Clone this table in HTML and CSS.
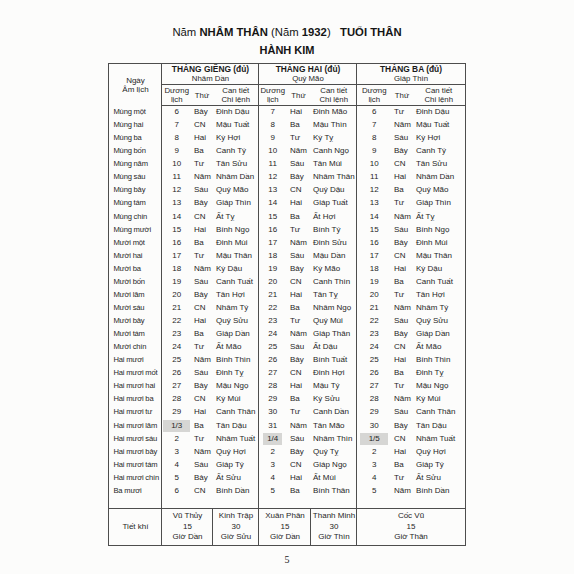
FILE: index.html
```html
<!DOCTYPE html>
<html lang="vi">
<head>
<meta charset="utf-8">
<title>Năm Nhâm Thân 1932</title>
<link rel="stylesheet" href="styles.css">
</head>
<body>
<div class="page">
  <div class="title"><span class="r">Năm </span><b>NHÂM THÂN</b> <span class="r">(Năm </span><b>1932</b><span class="r">)</span>&nbsp;&nbsp;&nbsp;<b>TUỔI THÂN</b></div>
  <div class="sub">HÀNH KIM</div>
  <table class="cal">
    <colgroup>
      <col class="w0">
      <col class="w1d"><col class="w1t"><col class="w1c">
      <col class="w2d"><col class="w2t"><col class="w2c">
      <col class="w3d"><col class="w3t"><col class="w3c">
    </colgroup>
    <thead>
      <tr class="h1">
        <th rowspan="2" class="hn">Ngày<br>Âm lịch</th>
        <th colspan="3" class="mh"><b>THÁNG GIÊNG (đủ)</b><br>Nhâm Dần</th>
        <th colspan="3" class="mh"><b>THÁNG HAI (đủ)</b><br>Quý Mão</th>
        <th colspan="3" class="mh"><b>THÁNG BA (đủ)</b><br>Giáp Thìn</th>
      </tr>
      <tr class="h2">
        <th class="sh">Dương<br>lịch</th><th class="sh">Thứ</th><th class="sh e">Can tiết<br>Chi lệnh</th>
        <th class="sh">Dương<br>lịch</th><th class="sh">Thứ</th><th class="sh e">Can tiết<br>Chi lệnh</th>
        <th class="sh">Dương<br>lịch</th><th class="sh">Thứ</th><th class="sh e">Can tiết<br>Chi lệnh</th>
      </tr>
    </thead>
    <tbody>
      <tr><td class="n">Mùng một</td><td class="d">6</td><td class="t">Bảy</td><td class="c">Đinh Dậu</td><td class="d">7</td><td class="t t2">Hai</td><td class="c c2">Đinh Mão</td><td class="d">6</td><td class="t">Tư</td><td class="c">Đinh Dậu</td></tr>
      <tr><td class="n">Mùng hai</td><td class="d">7</td><td class="t">CN</td><td class="c">Mậu Tuất</td><td class="d">8</td><td class="t t2">Ba</td><td class="c c2">Mậu Thìn</td><td class="d">7</td><td class="t">Năm</td><td class="c">Mậu Tuất</td></tr>
      <tr><td class="n">Mùng ba</td><td class="d">8</td><td class="t">Hai</td><td class="c">Kỷ Hợi</td><td class="d">9</td><td class="t t2">Tư</td><td class="c c2">Kỷ Tỵ</td><td class="d">8</td><td class="t">Sáu</td><td class="c">Kỷ Hợi</td></tr>
      <tr><td class="n">Mùng bốn</td><td class="d">9</td><td class="t">Ba</td><td class="c">Canh Tý</td><td class="d">10</td><td class="t t2">Năm</td><td class="c c2">Canh Ngọ</td><td class="d">9</td><td class="t">Bảy</td><td class="c">Canh Tý</td></tr>
      <tr><td class="n">Mùng năm</td><td class="d">10</td><td class="t">Tư</td><td class="c">Tân Sửu</td><td class="d">11</td><td class="t t2">Sáu</td><td class="c c2">Tân Mùi</td><td class="d">10</td><td class="t">CN</td><td class="c">Tân Sửu</td></tr>
      <tr><td class="n">Mùng sáu</td><td class="d">11</td><td class="t">Năm</td><td class="c">Nhâm Dần</td><td class="d">12</td><td class="t t2">Bảy</td><td class="c c2">Nhâm Thân</td><td class="d">11</td><td class="t">Hai</td><td class="c">Nhâm Dần</td></tr>
      <tr><td class="n">Mùng bảy</td><td class="d">12</td><td class="t">Sáu</td><td class="c">Quý Mão</td><td class="d">13</td><td class="t t2">CN</td><td class="c c2">Quý Dậu</td><td class="d">12</td><td class="t">Ba</td><td class="c">Quý Mão</td></tr>
      <tr><td class="n">Mùng tám</td><td class="d">13</td><td class="t">Bảy</td><td class="c">Giáp Thìn</td><td class="d">14</td><td class="t t2">Hai</td><td class="c c2">Giáp Tuất</td><td class="d">13</td><td class="t">Tư</td><td class="c">Giáp Thìn</td></tr>
      <tr><td class="n">Mùng chín</td><td class="d">14</td><td class="t">CN</td><td class="c">Ất Tỵ</td><td class="d">15</td><td class="t t2">Ba</td><td class="c c2">Ất Hợi</td><td class="d">14</td><td class="t">Năm</td><td class="c">Ất Tỵ</td></tr>
      <tr><td class="n">Mùng mười</td><td class="d">15</td><td class="t">Hai</td><td class="c">Bính Ngọ</td><td class="d">16</td><td class="t t2">Tư</td><td class="c c2">Bính Tý</td><td class="d">15</td><td class="t">Sáu</td><td class="c">Bính Ngọ</td></tr>
      <tr><td class="n">Mười một</td><td class="d">16</td><td class="t">Ba</td><td class="c">Đinh Mùi</td><td class="d">17</td><td class="t t2">Năm</td><td class="c c2">Đinh Sửu</td><td class="d">16</td><td class="t">Bảy</td><td class="c">Đinh Mùi</td></tr>
      <tr><td class="n">Mười hai</td><td class="d">17</td><td class="t">Tư</td><td class="c">Mậu Thân</td><td class="d">18</td><td class="t t2">Sáu</td><td class="c c2">Mậu Dần</td><td class="d">17</td><td class="t">CN</td><td class="c">Mậu Thân</td></tr>
      <tr><td class="n">Mười ba</td><td class="d">18</td><td class="t">Năm</td><td class="c">Kỷ Dậu</td><td class="d">19</td><td class="t t2">Bảy</td><td class="c c2">Kỷ Mão</td><td class="d">18</td><td class="t">Hai</td><td class="c">Kỷ Dậu</td></tr>
      <tr><td class="n">Mười bốn</td><td class="d">19</td><td class="t">Sáu</td><td class="c">Canh Tuất</td><td class="d">20</td><td class="t t2">CN</td><td class="c c2">Canh Thìn</td><td class="d">19</td><td class="t">Ba</td><td class="c">Canh Tuất</td></tr>
      <tr><td class="n">Mười lăm</td><td class="d">20</td><td class="t">Bảy</td><td class="c">Tân Hợi</td><td class="d">21</td><td class="t t2">Hai</td><td class="c c2">Tân Tỵ</td><td class="d">20</td><td class="t">Tư</td><td class="c">Tân Hợi</td></tr>
      <tr><td class="n">Mười sáu</td><td class="d">21</td><td class="t">CN</td><td class="c">Nhâm Tý</td><td class="d">22</td><td class="t t2">Ba</td><td class="c c2">Nhâm Ngọ</td><td class="d">21</td><td class="t">Năm</td><td class="c">Nhâm Tý</td></tr>
      <tr><td class="n">Mười bảy</td><td class="d">22</td><td class="t">Hai</td><td class="c">Quý Sửu</td><td class="d">23</td><td class="t t2">Tư</td><td class="c c2">Quý Mùi</td><td class="d">22</td><td class="t">Sáu</td><td class="c">Quý Sửu</td></tr>
      <tr><td class="n">Mười tám</td><td class="d">23</td><td class="t">Ba</td><td class="c">Giáp Dần</td><td class="d">24</td><td class="t t2">Năm</td><td class="c c2">Giáp Thân</td><td class="d">23</td><td class="t">Bảy</td><td class="c">Giáp Dần</td></tr>
      <tr><td class="n">Mười chín</td><td class="d">24</td><td class="t">Tư</td><td class="c">Ất Mão</td><td class="d">25</td><td class="t t2">Sáu</td><td class="c c2">Ất Dậu</td><td class="d">24</td><td class="t">CN</td><td class="c">Ất Mão</td></tr>
      <tr><td class="n">Hai mươi</td><td class="d">25</td><td class="t">Năm</td><td class="c">Bính Thìn</td><td class="d">26</td><td class="t t2">Bảy</td><td class="c c2">Bính Tuất</td><td class="d">25</td><td class="t">Hai</td><td class="c">Bính Thìn</td></tr>
      <tr><td class="n">Hai mươi mốt</td><td class="d">26</td><td class="t">Sáu</td><td class="c">Đinh Tỵ</td><td class="d">27</td><td class="t t2">CN</td><td class="c c2">Đinh Hợi</td><td class="d">26</td><td class="t">Ba</td><td class="c">Đinh Tỵ</td></tr>
      <tr><td class="n">Hai mươi hai</td><td class="d">27</td><td class="t">Bảy</td><td class="c">Mậu Ngọ</td><td class="d">28</td><td class="t t2">Hai</td><td class="c c2">Mậu Tý</td><td class="d">27</td><td class="t">Tư</td><td class="c">Mậu Ngọ</td></tr>
      <tr><td class="n">Hai mươi ba</td><td class="d">28</td><td class="t">CN</td><td class="c">Kỷ Mùi</td><td class="d">29</td><td class="t t2">Ba</td><td class="c c2">Kỷ Sửu</td><td class="d">28</td><td class="t">Năm</td><td class="c">Kỷ Mùi</td></tr>
      <tr><td class="n">Hai mươi tư</td><td class="d">29</td><td class="t">Hai</td><td class="c">Canh Thân</td><td class="d">30</td><td class="t t2">Tư</td><td class="c c2">Canh Dần</td><td class="d">29</td><td class="t">Sáu</td><td class="c">Canh Thân</td></tr>
      <tr><td class="n">Hai mươi lăm</td><td class="d"><span class="hl h1">1/3</span></td><td class="t">Ba</td><td class="c">Tân Dậu</td><td class="d">31</td><td class="t t2">Năm</td><td class="c c2">Tân Mão</td><td class="d">30</td><td class="t">Bảy</td><td class="c">Tân Dậu</td></tr>
      <tr><td class="n">Hai mươi sáu</td><td class="d">2</td><td class="t">Tư</td><td class="c">Nhâm Tuất</td><td class="d"><span class="hl h2">1/4</span></td><td class="t t2">Sáu</td><td class="c c2">Nhâm Thìn</td><td class="d"><span class="hl h3">1/5</span></td><td class="t">CN</td><td class="c">Nhâm Tuất</td></tr>
      <tr><td class="n">Hai mươi bảy</td><td class="d">3</td><td class="t">Năm</td><td class="c">Quý Hợi</td><td class="d">2</td><td class="t t2">Bảy</td><td class="c c2">Quý Tỵ</td><td class="d">2</td><td class="t">Hai</td><td class="c">Quý Hợi</td></tr>
      <tr><td class="n">Hai mươi tám</td><td class="d">4</td><td class="t">Sáu</td><td class="c">Giáp Tý</td><td class="d">3</td><td class="t t2">CN</td><td class="c c2">Giáp Ngọ</td><td class="d">3</td><td class="t">Ba</td><td class="c">Giáp Tý</td></tr>
      <tr><td class="n">Hai mươi chín</td><td class="d">5</td><td class="t">Bảy</td><td class="c">Ất Sửu</td><td class="d">4</td><td class="t t2">Hai</td><td class="c c2">Ất Mùi</td><td class="d">4</td><td class="t">Tư</td><td class="c">Ất Sửu</td></tr>
      <tr><td class="n">Ba mươi</td><td class="d">6</td><td class="t">CN</td><td class="c">Bính Dần</td><td class="d">5</td><td class="t t2">Ba</td><td class="c c2">Bính Thân</td><td class="d">5</td><td class="t">Năm</td><td class="c">Bính Dần</td></tr>
      <tr class="gap"><td class="n"></td><td></td><td></td><td class="c"></td><td></td><td></td><td class="c"></td><td></td><td></td><td class="c"></td></tr>
    </tbody>
    <tfoot>
      <tr class="tk">
        <td class="n tkn">Tiết khí</td>
        <td colspan="2" class="tkc">Vũ Thủy<br>15<br>Giờ Dần</td>
        <td class="tkc">Kinh Trập<br>30<br>Giờ Sửu</td>
        <td colspan="2" class="tkc">Xuân Phân<br>15<br>Giờ Dần</td>
        <td class="tkc">Thanh Minh<br>30<br>Giờ Thìn</td>
        <td colspan="3" class="tkc">Cốc Vũ<br>15<br>Giờ Thân</td>
      </tr>
    </tfoot>
  </table>
  <div class="pno">5</div>
</div>
</body>
</html>
```
FILE: styles.css
```css
html, body {
  margin: 0;
  padding: 0;
  background: #fcfcfb;
}
.page {
  width: 574px;
  height: 574px;
  padding-top: 25px;
  box-sizing: border-box;
  overflow: hidden;
  font-family: "Liberation Sans", Arial, sans-serif;
  color: #262626;
}
.title {
  text-align: center;
  font-size: 11.3px;
  line-height: 14px;
  height: 14px;
  color: #151515;
}
.title b { font-weight: bold; }
.title .r { font-weight: normal; }
.sub {
  margin-top: 4px;
  text-align: center;
  font-size: 11px;
  font-weight: bold;
  line-height: 14px;
  height: 14px;
  color: #151515;
}
.cal {
  border-collapse: collapse;
  table-layout: fixed;
  width: 357px;
  margin: 6px auto 0;
  border: 1px solid #4d4d4d;
  font-size: 8px;
}
.w0 { width: 53px; }
.w1d { width: 29px; }
.w1t { width: 22px; }
.w1c { width: 46px; }
.w2d { width: 27px; }
.w2t { width: 25px; }
.w2c { width: 46px; }
.w3d { width: 34px; }
.w3t { width: 22px; }
.w3c { width: 52px; }
.cal th, .cal td {
  padding: 0;
  white-space: nowrap;
  overflow: hidden;
}
.cal th {
  font-weight: normal;
  vertical-align: middle;
  text-align: center;
  line-height: 9px;
}
.h1 { height: 21px; }
.h2 { height: 21px; }
.hn {
  border-right: 1px solid #4d4d4d;
  line-height: 9.5px;
  font-size: 8px;
}
.mh {
  border-right: 1px solid #4d4d4d;
  border-bottom: 1px solid #4d4d4d;
  font-size: 7.8px;
}
.mh b {
  font-size: 8.4px;
  font-weight: bold;
  color: #1a1a1a;
}
.sh {
  border-bottom: 1px solid #4d4d4d;
  font-size: 7.8px;
}
.sh.e { border-right: 1px solid #4d4d4d; }
.cal tbody tr { height: 13.07px; }
.cal tbody td {
  line-height: 12px;
  vertical-align: middle;
}
.n {
  text-align: left;
  padding-left: 4px !important;
  border-right: 1px solid #4d4d4d;
  font-size: 7.6px;
  letter-spacing: -0.2px;
}
.d { text-align: center; }
.t { text-align: left; padding-left: 3px !important; }
.t2 { padding-left: 4px !important; }
.c {
  text-align: left;
  padding-left: 3px !important;
  border-right: 1px solid #4d4d4d;
}
.c2 { padding-left: 2px !important; }
.hl {
  display: block;
  height: 12px;
  margin: 0 auto;
  background: #d6d6d4;
  line-height: 12px;
  text-align: center;
}
.hl.h1 { width: 27px; }
.hl.h2 { width: 19px; }
.hl.h3 { width: 28px; }
.cal tbody tr.gap { height: 11px; }
.tk { height: 37px; }
.tk td {
  border-top: 1px solid #4d4d4d;
  border-right: 1px solid #4d4d4d;
  text-align: center;
  vertical-align: middle;
  line-height: 10.5px;
}
.tkn { text-align: center !important; padding-left: 0 !important; font-size: 8px; letter-spacing: 0; }
.pno {
  margin-top: 8px;
  text-align: center;
  font-family: "Liberation Serif", "Times New Roman", serif;
  font-size: 10px;
  line-height: 12px;
  color: #222;
}
```
